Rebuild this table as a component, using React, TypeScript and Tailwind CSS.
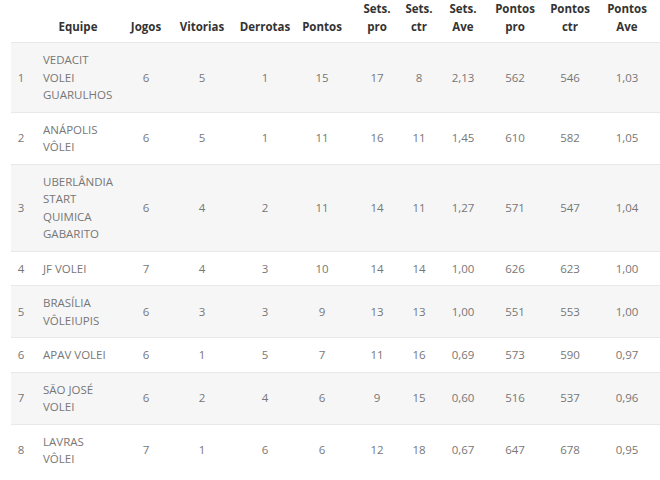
const rows = [
  { pos: 1, team: 'VEDACIT VOLEI GUARULHOS', j: 6, v: 5, d: 1, p: 15, sp: 17, sc: 8, sa: '2,13', pp: 562, pc: 546, pa: '1,03' },
  { pos: 2, team: 'ANÁPOLIS VÔLEI', j: 6, v: 5, d: 1, p: 11, sp: 16, sc: 11, sa: '1,45', pp: 610, pc: 582, pa: '1,05' },
  { pos: 3, team: 'UBERLÂNDIA START QUIMICA GABARITO', j: 6, v: 4, d: 2, p: 11, sp: 14, sc: 11, sa: '1,27', pp: 571, pc: 547, pa: '1,04' },
  { pos: 4, team: 'JF VOLEI', j: 7, v: 4, d: 3, p: 10, sp: 14, sc: 14, sa: '1,00', pp: 626, pc: 623, pa: '1,00' },
  { pos: 5, team: 'BRASÍLIA VÔLEIUPIS', j: 6, v: 3, d: 3, p: 9, sp: 13, sc: 13, sa: '1,00', pp: 551, pc: 553, pa: '1,00' },
  { pos: 6, team: 'APAV VOLEI', j: 6, v: 1, d: 5, p: 7, sp: 11, sc: 16, sa: '0,69', pp: 573, pc: 590, pa: '0,97' },
  { pos: 7, team: 'SÃO JOSÉ VOLEI', j: 6, v: 2, d: 4, p: 6, sp: 9, sc: 15, sa: '0,60', pp: 516, pc: 537, pa: '0,96' },
  { pos: 8, team: 'LAVRAS VÔLEI', j: 7, v: 1, d: 6, p: 6, sp: 12, sc: 18, sa: '0,67', pp: 647, pc: 678, pa: '0,95' },
];

const widths = [20, 94, 42, 70, 56, 58, 52, 32, 56, 48, 62, 59];

export default function App() {
  return (
    <div className="w-[660px] h-[480px] bg-white overflow-hidden pl-[11px] font-['Open_Sans',sans-serif] text-[11.5px] leading-[17.5px]">
      <table className="table-fixed border-collapse w-[649px]">
        <colgroup>
          {widths.map((w, i) => (
            <col key={i} style={{ width: w }} />
          ))}
        </colgroup>
        <thead>
          <tr className="text-[#333] font-bold align-bottom text-center">
            <th className="pb-[7px]"></th>
            <th className="pb-[7px]">Equipe</th>
            <th className="pb-[7px]">Jogos</th>
            <th className="pb-[7px]">Vitorias</th>
            <th className="pb-[7px]">Derrotas</th>
            <th className="pb-[7px]">Pontos</th>
            <th className="pb-[7px]">Sets.<br />pro</th>
            <th className="pb-[7px]">Sets.<br />ctr</th>
            <th className="pb-[7px]">Sets.<br />Ave</th>
            <th className="pb-[7px]">Pontos<br />pro</th>
            <th className="pb-[7px]">Pontos<br />ctr</th>
            <th className="pb-[7px] pr-[7px]">Pontos<br />Ave</th>
          </tr>
        </thead>
        <tbody className="text-[#777]">
          {rows.map((r, i) => (
            <tr key={r.pos} className={`border-t border-[#e8e8e8] align-middle text-center ${i % 2 === 0 ? 'bg-[#f6f6f6]' : 'bg-white'}`}>
              <td className="py-2">{r.pos}</td>
              <td className="py-2 pl-3 pr-2 text-left">{r.team}</td>
              <td className="py-2">{r.j}</td>
              <td className="py-2">{r.v}</td>
              <td className="py-2">{r.d}</td>
              <td className="py-2">{r.p}</td>
              <td className="py-2">{r.sp}</td>
              <td className="py-2">{r.sc}</td>
              <td className="py-2">{r.sa}</td>
              <td className="py-2">{r.pp}</td>
              <td className="py-2">{r.pc}</td>
              <td className="py-2 pr-[7px]">{r.pa}</td>
            </tr>
          ))}
        </tbody>
      </table>
    </div>
  );
}
